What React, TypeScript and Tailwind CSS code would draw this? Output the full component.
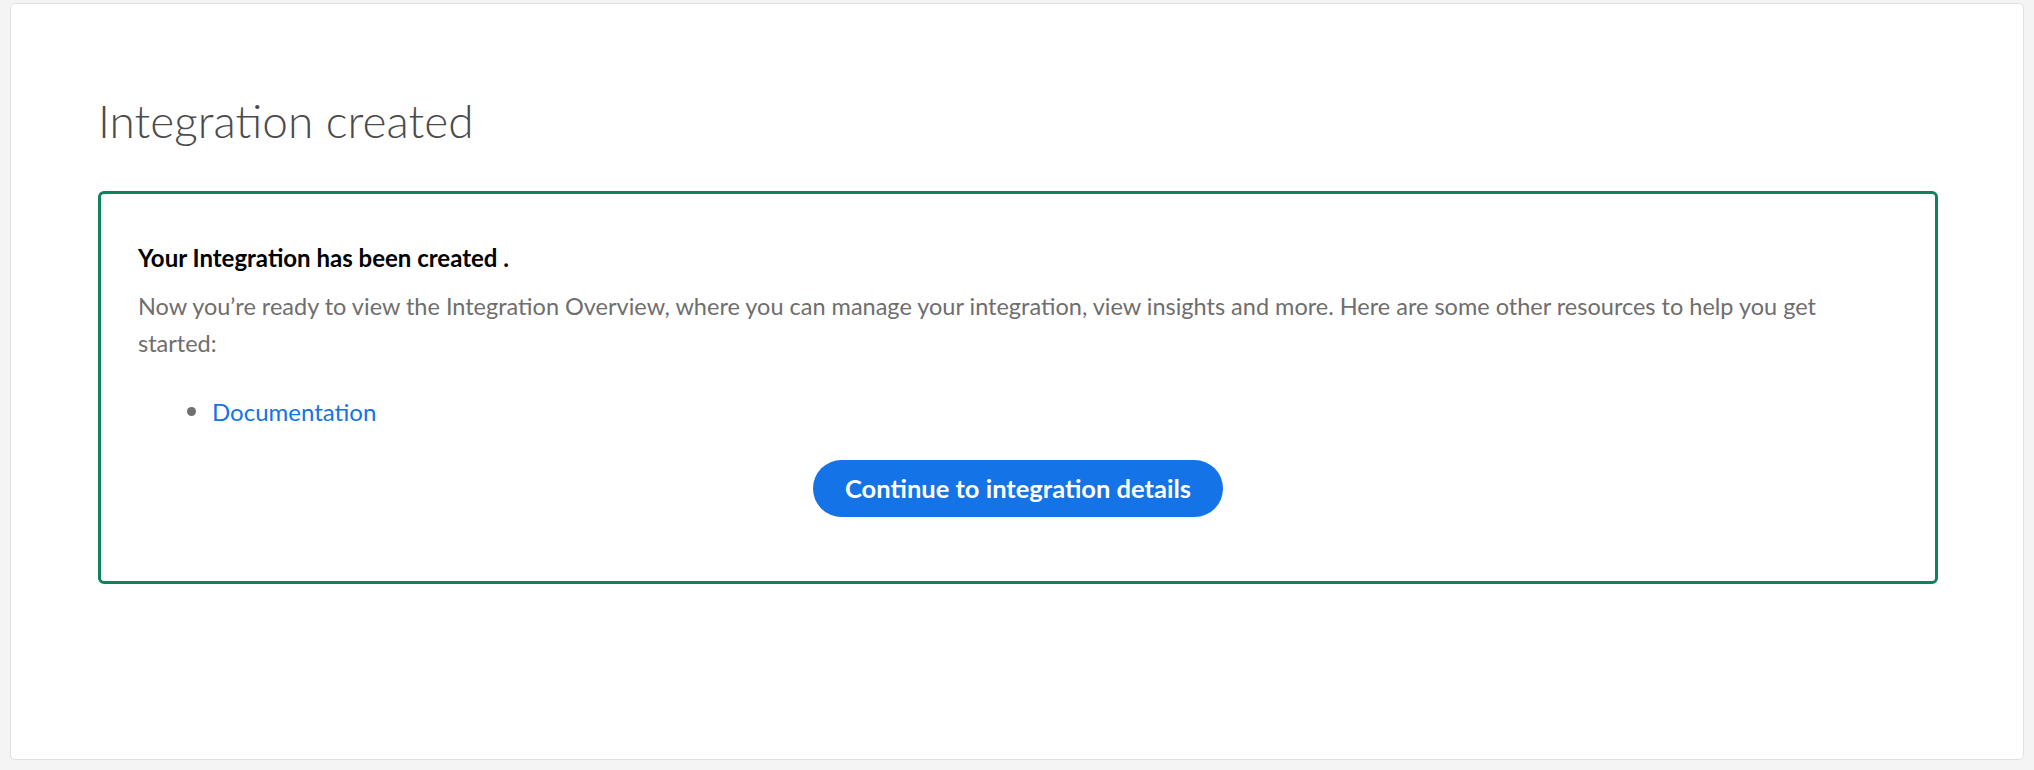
import React from 'react';

const resources = [{ label: 'Documentation', href: '#' }];

const App: React.FC = () => {
    return (
        <div className="min-h-[770px] bg-[#f4f4f4] pt-[3px] pb-[9px]" style={{ fontFamily: 'Lato, "Open Sans", sans-serif' }}>
            <div className="mx-[10px] bg-white border border-[#e1e1e1] rounded-[5px] pt-[91px] pb-[175px] pl-[87px] pr-[85px]">
                <h1 className="text-[46px] leading-[52px] font-light text-[#4b4b4b]">Integration created</h1>

                <div className="mt-[44px] border-[3px] border-[#0c8358] rounded-[6px] pt-[50px] pb-[64px] px-[37px]">
                    <p className="text-[24px] leading-[28px] font-bold text-black">Your Integration has been created .</p>
                    <p className="mt-[16px] pr-[28px] text-[23.5px] leading-[37px] text-[#6e6e6e]">
                        Now you’re ready to view the Integration Overview, where you can manage your integration, view insights and more. Here are some other resources to help you get started:
                    </p>

                    <ul className="mt-[31px] pl-[49px]">
                        {resources.map(r => (
                            <li key={r.label} className="flex items-center gap-[16px] text-[24px] leading-[37px]">
                                <span className="w-[9px] h-[9px] rounded-full bg-[#707070]"></span>
                                <a href={r.href} className="text-[#1473e6]">{r.label}</a>
                            </li>
                        ))}
                    </ul>

                    <div className="mt-[30px] flex justify-center">
                        <button className="h-[57px] px-[32px] rounded-full bg-[#1473e6] text-white text-[25.5px] font-bold">
                            Continue to integration details
                        </button>
                    </div>
                </div>
            </div>
        </div>
    );
};

export default App;
